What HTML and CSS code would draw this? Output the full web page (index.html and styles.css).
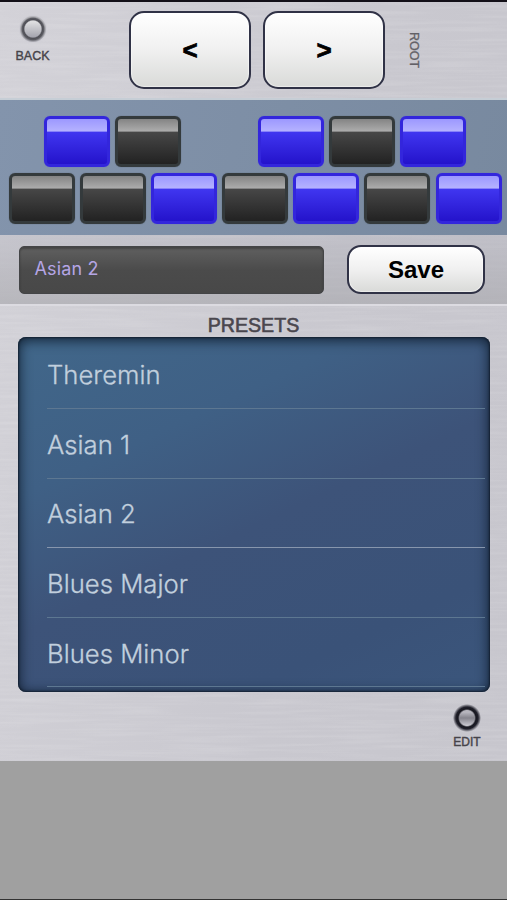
FILE: index.html
```
<!DOCTYPE html>
<html lang="en">
<head>
<meta charset="utf-8">
<title>Presets</title>
<link rel="stylesheet" href="styles.css">
</head>
<body>
<main class="panel">
  <svg class="brushed" width="507" height="758" aria-hidden="true">
    <filter id="grain" x="0" y="0" width="100%" height="100%">
      <feTurbulence type="fractalNoise" baseFrequency="0.012 0.3" numOctaves="2" seed="4"/>
      <feColorMatrix values="0 0 0 0 1  0 0 0 0 1  0 0 0 0 1  1.6 0 0 0 -0.65"/>
    </filter>
    <rect width="507" height="758" filter="url(#grain)"/>
  </svg>
  <header class="top">
    <button class="knob back"><span class="led"></span><span class="knob-label">BACK</span></button>
    <button class="light arrow">&lt;</button>
    <button class="light arrow">&gt;</button>
    <span class="root">ROOT</span>
  </header>
  <section class="keys">
    <div class="row sharps">
      <i class="key on"></i><i class="key"></i><i class="gap"></i><i class="key on"></i><i class="key"></i><i class="key on"></i>
    </div>
    <div class="row">
      <i class="key"></i><i class="key"></i><i class="key on"></i><i class="key"></i><i class="key on"></i><i class="key"></i><i class="key on"></i>
    </div>
  </section>
  <section class="save-bar">
    <div class="field">Asian 2</div>
    <button class="light save">Save</button>
  </section>
  <section class="presets">
    <h1 class="title">PRESETS</h1>
    <ul class="list">
      <li class="item"><span>Theremin</span></li>
      <li class="item"><span>Asian 1</span></li>
      <li class="item bright"><span>Asian 2</span></li>
      <li class="item"><span>Blues Major</span></li>
      <li class="item"><span>Blues Minor</span></li>
    </ul>
    <button class="knob edit"><span class="led"></span><span class="knob-label">EDIT</span></button>
  </section>
</main>
</body>
</html>
```
FILE: styles.css
```
* { box-sizing: border-box; }
body {
  margin: 0;
  height: 900px;
  overflow: hidden;
  background: #a0a0a0;
  border-top: 2px solid #131018;
  border-bottom: 1px solid #333;
  font-family: "Liberation Sans", Arial, sans-serif;
}
button { margin: 0; padding: 0; border: 0; background: none; font-family: inherit; }
.panel {
  position: relative;
  isolation: isolate;
  height: 758.5px;
  background: linear-gradient(100deg, #d3d2d8, #c9c8cf 60%, #c7c6cd);
}
.brushed { position: absolute; left: 0; top: 0; z-index: -1; opacity: .16; }

.top { display: flex; height: 98px; padding-top: 9px; border-bottom: 2px solid #c6ced6; }
.knob { display: flex; flex-direction: column; align-items: center; color: #46444a; }
.back { width: 65px; margin-right: 64px; padding-top: 4px; }
.led {
  width: 28px;
  height: 28px;
  border-radius: 50%;
  background: radial-gradient(circle closest-side, transparent 8px, #4f4f56 9.3px, #5b5b62 10.8px, rgba(130,130,136,.6) 12px, #cfced5 13.5px),
    linear-gradient(#dedee0 25%, #a3a3ad 80%);
}
.knob-label { font-size: 12.5px; line-height: 14px; -webkit-text-stroke: .4px; }
.back .knob-label { margin-top: 6px; }
.light {
  border: 2px solid #303246;
  background: linear-gradient(#fff, #f0f0f0 50%, #d9dad8);
  box-shadow: inset 0 0 1px 1px rgba(255,255,255,.5);
  color: #000;
  font-weight: bold;
}
.arrow { width: 122px; height: 78px; border-radius: 15px; font-size: 26px; line-height: 74px; -webkit-text-stroke: .7px #000; }
.arrow + .arrow { margin-left: 12px; }
.root {
  writing-mode: vertical-rl;
  align-self: flex-start;
  margin: 21px 0 0 21px;
  font-size: 12.5px;
  line-height: 16px;
  color: #626066;
  -webkit-text-stroke: .3px;
}

.keys {
  height: 135px;
  padding: 15.5px 5px 0 8.5px;
  background: linear-gradient(100deg, #8394ac, #78899f);
}
.row { display: flex; gap: 5.2px; }
.sharps { margin: 0 0 6px 35.7px; }
.gap { width: 66px; }
.key {
  width: 66px;
  height: 51px;
  border: 3px solid #343a3c;
  border-radius: 6px;
  background: linear-gradient(#848484, #acacac 27%, #474747 29%, #222 100%);
  box-shadow: 0 0 1px #4a5560;
}
.key.on {
  border-color: #3326dc;
  background: linear-gradient(#9c98ff, #b5b2ff 27%, #4036f0 29%, #2413cb 100%);
  box-shadow: 0 0 1px #5660c8;
}

.save-bar {
  display: flex;
  height: 71px;
  padding: 10px 22px 0 19px;
  justify-content: space-between;
  border-bottom: 2px solid #dcdbe1;
  background: linear-gradient(rgba(180,180,190,.4), rgba(165,165,170,.6));
}
.field {
  width: 305px;
  height: 48px;
  margin-top: 1px;
  padding-left: 14.5px;
  border: 1px solid #444547;
  border-radius: 5px;
  background: linear-gradient(#606060, #4b4b4b 50%, #484848);
  box-shadow: inset 0 2px 2px rgba(50,50,50,.6);
  color: #b5a5e5;
  font: 18px/44px Inter, sans-serif;
  letter-spacing: .15px;
}
.save { width: 138px; height: 49px; border-radius: 14px; font-size: 24px; line-height: 45px; }

.title {
  margin: 0;
  padding: 8px 0 0;
  font-size: 19.6px;
  line-height: 22px;
  height: 31px;
  font-weight: normal;
  text-align: center;
  color: #4a474e;
  -webkit-text-stroke: .6px;
}
.list {
  width: 472px;
  height: 355px;
  margin: 0 0 0 18px;
  padding: 2.5px 5px 0 29px;
  list-style: none;
  overflow: hidden;
  border-radius: 8px;
  background: linear-gradient(155deg, #41678a 0%, #3f6085 28%, #3d5379 52%, #3a5278 80%, #3b567c 100%);
  box-shadow: inset 0 2px 12px 2px rgba(10,22,36,.75), inset 0 0 2px 1px rgba(20,30,42,.8);
}
.item {
  display: flex;
  height: 69.6px;
  align-items: center;
  border-bottom: 1.5px solid #5d7791;
  color: #c1cfdd;
  font: 300 25.7px/32px Inter, sans-serif;
  -webkit-text-stroke: .3px;
}
.item.bright { border-color: #8796ad; }
.item span { padding-top: 3px; }
.edit { width: 70px; margin: 12px 0 0 432px; }
.edit .led {
  background: radial-gradient(circle closest-side, transparent 7.5px, #17171f 9px, #20202a 11px, rgba(60,60,70,.65) 12.3px, #c9c8cf 14px),
    linear-gradient(#b6b5bd 30%, #85848d 50%, #d0cfd6 80%);
}
.edit .knob-label { margin-top: 3px; font-size: 12px; }
```
